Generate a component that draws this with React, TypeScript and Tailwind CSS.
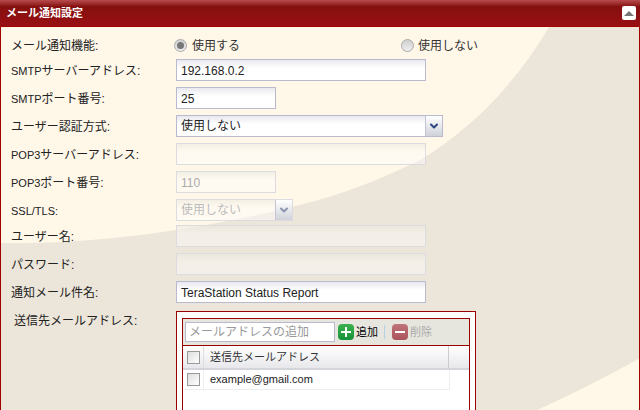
import type { ReactNode } from "react";
import { ChevronDown } from "lucide-react";

const jp = "font-['Liberation_Sans','Noto_Sans_CJK_JP',sans-serif]";

const Label = ({ text }: { text: ReactNode }) => (
    <div className="w-[175px] pl-[10px] pt-[2px] shrink-0 text-[12px] text-[#222]">{text}</div>
);

const Latin = ({ children }: { children: string }) => <span className="text-[11px]">{children}</span>;

const Field = ({ width, value, disabled }: { width: string; value?: string; disabled?: boolean }) => (
    <div
        className={`${width} h-[22px] border px-[4px] text-[12px] leading-[22px] ${
            disabled
                ? "border-[#dcdbe0] bg-gradient-to-b from-[#ece9e0]/60 to-white/40 to-40% text-[#aaa]"
                : "border-[#b9b9d0] bg-gradient-to-b from-[#e8e8ee] to-white to-40% text-[#222]"
        }`}
    >
        {value}
    </div>
);

const Select = ({ width, value, disabled }: { width: string; value: string; disabled?: boolean }) => (
    <div
        className={`${width} h-[22px] flex border text-[12px] leading-[21px] ${
            disabled ? "border-[#dcdbe0] text-[#bbb]" : "border-[#b9b9d0] text-[#222]"
        }`}
    >
        <div
            className={`flex-1 px-[4px] bg-gradient-to-b to-40% ${
                disabled ? "from-[#ece9e0]/60 to-white/40" : "from-[#e8e8ee] to-white"
            }`}
        >
            {value}
        </div>
        <div className="w-[17px] flex items-center justify-center bg-gradient-to-b from-white to-[#cfd2da] border-l border-[#c5c5d5]">
            <ChevronDown size={12} strokeWidth={4} className={disabled ? "text-[#8b93ad]" : "text-[#2f4680]"} />
        </div>
    </div>
);

const Radio = ({ checked }: { checked?: boolean }) => (
    <span className="w-[13px] h-[13px] rounded-full border border-[#aaa] bg-gradient-to-b from-[#d0d0d0] to-[#eee] flex items-center justify-center">
        {checked && <span className="w-[7px] h-[7px] rounded-full bg-[#777]" />}
    </span>
);

const Check = () => (
    <span className="w-[13px] h-[13px] border border-[#999] bg-gradient-to-br from-[#dedede] to-white block" />
);

export default function App() {
    return (
        <div className={`${jp} w-[640px] h-[410px] overflow-hidden relative bg-[#fff7e8]`}>
            <svg className="absolute inset-0" width="640" height="410" viewBox="0 0 640 410">
                <path
                    d="M549 27 C515 85 470 130 420 160 C380 180 340 195 300 205 C200 230 90 245 0 243 L0 410 L537 410 C570 395 610 375 640 358 L640 27 Z"
                    fill="#ece5d9"
                />
            </svg>
            <div className="relative h-full flex flex-col border-x border-[#a00000]">
                <div className="h-[27px] shrink-0 -mx-px flex items-center justify-between pl-[6px] pr-[4px] bg-gradient-to-b from-[#b94a4e] via-[#85100f] via-25% to-[#990f13] border-b border-[#a00000]">
                    <span className="text-white text-[11px] font-bold">メール通知設定</span>
                    <span className="w-[14px] h-[14px] rounded-[2px] bg-white flex items-center justify-center">
                        <span className="w-0 h-0 border-x-[5px] border-x-transparent border-b-[5px] border-b-[#777]" />
                    </span>
                </div>

                <div className="flex flex-col">
                    <div className="h-[29px] flex items-center pt-[7px]">
                        <div className="w-[173px] pl-[10px] pt-[1px] shrink-0 text-[12px] text-[#222]">メール通知機能:</div>
                        <div className="flex items-center gap-[5px] w-[227px] text-[12px] text-[#333]">
                            <Radio checked />
                            <span className="pt-[1px]">使用する</span>
                        </div>
                        <div className="flex items-center gap-[4px] text-[12px] text-[#333]">
                            <Radio />
                            <span className="pt-[1px]">使用しない</span>
                        </div>
                    </div>
                    <div className="h-[28px] flex items-center">
                        <Label text={<><Latin>SMTP</Latin>サーバーアドレス:</>} />
                        <Field width="w-[250px]" value="192.168.0.2" />
                    </div>
                    <div className="h-[28px] flex items-center">
                        <Label text={<><Latin>SMTP</Latin>ポート番号:</>} />
                        <Field width="w-[100px]" value="25" />
                    </div>
                    <div className="h-[28px] flex items-center">
                        <Label text="ユーザー認証方式:" />
                        <Select width="w-[267px]" value="使用しない" />
                    </div>
                    <div className="h-[28px] flex items-center">
                        <Label text={<><Latin>POP3</Latin>サーバーアドレス:</>} />
                        <Field width="w-[250px]" disabled />
                    </div>
                    <div className="h-[28px] flex items-center">
                        <Label text={<><Latin>POP3</Latin>ポート番号:</>} />
                        <Field width="w-[100px]" value="110" disabled />
                    </div>
                    <div className="h-[26px] pt-[2px] flex items-center">
                        <Label text={<Latin>SSL/TLS:</Latin>} />
                        <Select width="w-[117px]" value="使用しない" disabled />
                    </div>
                    <div className="h-[28px] flex items-center">
                        <Label text="ユーザー名:" />
                        <Field width="w-[250px]" disabled />
                    </div>
                    <div className="h-[28px] flex items-center">
                        <Label text="パスワード:" />
                        <Field width="w-[250px]" disabled />
                    </div>
                    <div className="h-[28px] flex items-center">
                        <Label text="通知メール件名:" />
                        <Field width="w-[250px]" value="TeraStation Status Report" />
                    </div>
                </div>

                <div className="flex pt-[5px]">
                    <div className="w-[175px] pl-[13px] pt-[1px] text-[12px] text-[#222] shrink-0">送信先メールアドレス:</div>
                    <div className="w-[300px] h-[120px] border border-[#900] bg-white px-[5px] pt-[6px]">
                        <div className="border border-[#900] h-full">
                            <div className="h-[27px] flex items-center bg-[#e6e6df] border-b border-[#900] pl-[2px]">
                                <div className="w-[150px] h-[20px] border border-[#b9b9d0] bg-white px-[3px] text-[12px] leading-[18px] text-[#999]">
                                    メールアドレスの追加
                                </div>
                                <span className="ml-[3px] w-[16px] h-[16px] rounded-[4px] bg-gradient-to-b from-[#3cb04e] to-[#149238] flex items-center justify-center">
                                    <svg width="12" height="12" viewBox="0 0 12 12">
                                        <path d="M5 1h2v4h4v2H7v4H5V7H1V5h4z" fill="#fff" />
                                    </svg>
                                </span>
                                <span className="ml-[2px] text-[11px] text-black">追加</span>
                                <span className="ml-[6px] w-px h-[14px] bg-[#b5d0ea]" />
                                <span className="ml-[7px] w-[16px] h-[16px] rounded-[4px] bg-gradient-to-b from-[#c0747a] to-[#a9545a] flex items-center justify-center">
                                    <span className="w-[10px] h-[2px] bg-white" />
                                </span>
                                <span className="ml-[2px] text-[11px] text-[#aaa]">削除</span>
                            </div>
                            <div className="h-[24px] flex items-center bg-gradient-to-b from-white to-[#e8e8ec] border-b-2 border-[#d3d5da]">
                                <div className="w-[21px] h-full flex items-center justify-center border-r border-[#ddd]">
                                    <Check />
                                </div>
                                <div className="w-[245px] h-full flex items-center pl-[6px] pt-[1px] text-[11px] text-[#333] border-r border-[#ccc]">
                                    送信先メールアドレス
                                </div>
                            </div>
                            <div className="h-[20px] w-[267px] flex items-center border-b border-r border-[#eee]">
                                <div className="w-[21px] h-full flex items-center justify-center border-r border-[#eee]">
                                    <Check />
                                </div>
                                <div className="pl-[6px] text-[11px] text-[#222]">example@gmail.com</div>
                            </div>
                        </div>
                    </div>
                </div>
            </div>
        </div>
    );
}
